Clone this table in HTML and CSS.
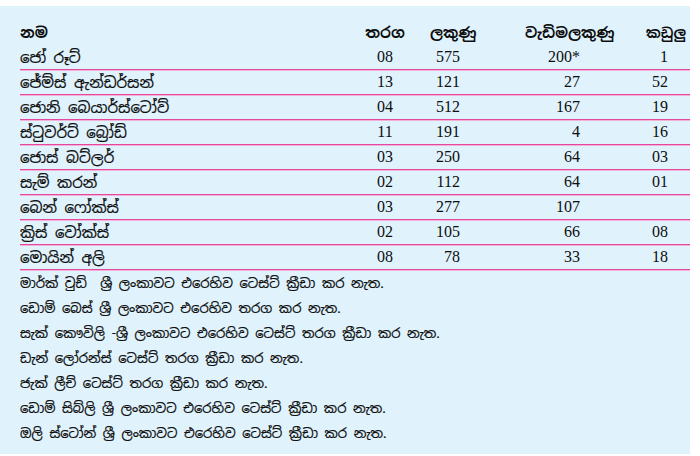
FILE: index.html
```html
<!DOCTYPE html>
<html lang="si">
<head>
<meta charset="utf-8">
<link rel="stylesheet" href="styles.css">
</head>
<body>
<div class="panel">
  <div class="row head">
    <div class="c name">නම</div>
    <div class="c mat">තරග</div>
    <div class="c runs">ලකුණු</div>
    <div class="c best">වැඩිමලකුණු</div>
    <div class="c wk">කඩුලු</div>
  </div>
  <div class="row">
    <div class="c name">ජෝ රූට්</div>
    <div class="c mat num">08</div>
    <div class="c runs num">575</div>
    <div class="c best num">200*</div>
    <div class="c wk num">1</div>
  </div>
  <div class="row">
    <div class="c name">ජේම්ස් ඇන්ඩර්සන්</div>
    <div class="c mat num">13</div>
    <div class="c runs num">121</div>
    <div class="c best num">27</div>
    <div class="c wk num">52</div>
  </div>
  <div class="row">
    <div class="c name">ජොනි බෙයාර්ස්ටෝව්</div>
    <div class="c mat num">04</div>
    <div class="c runs num">512</div>
    <div class="c best num">167</div>
    <div class="c wk num">19</div>
  </div>
  <div class="row">
    <div class="c name">ස්ටුවර්ට් බ්‍රෝඩ්</div>
    <div class="c mat num">11</div>
    <div class="c runs num">191</div>
    <div class="c best num">4</div>
    <div class="c wk num">16</div>
  </div>
  <div class="row">
    <div class="c name">ජොස් බට්ලර්</div>
    <div class="c mat num">03</div>
    <div class="c runs num">250</div>
    <div class="c best num">64</div>
    <div class="c wk num">03</div>
  </div>
  <div class="row">
    <div class="c name">සැම් කරන්</div>
    <div class="c mat num">02</div>
    <div class="c runs num">112</div>
    <div class="c best num">64</div>
    <div class="c wk num">01</div>
  </div>
  <div class="row">
    <div class="c name">බෙන් ෆෝක්ස්</div>
    <div class="c mat num">03</div>
    <div class="c runs num">277</div>
    <div class="c best num">107</div>
    <div class="c wk num"></div>
  </div>
  <div class="row">
    <div class="c name">ක්‍රිස් වෝක්ස්</div>
    <div class="c mat num">02</div>
    <div class="c runs num">105</div>
    <div class="c best num">66</div>
    <div class="c wk num">08</div>
  </div>
  <div class="row">
    <div class="c name">මොයින් අලි</div>
    <div class="c mat num">08</div>
    <div class="c runs num">78</div>
    <div class="c best num">33</div>
    <div class="c wk num">18</div>
  </div>
  <ul class="notes">
    <li>මාර්ක් වුඩ්&nbsp; ශ්‍රී ලංකාවට එරෙහිව ටෙස්ට් ක්‍රීඩා කර නැත.</li>
    <li>ඩොම් බෙස් ශ්‍රී ලංකාවට එරෙහිව තරග කර නැත.</li>
    <li>සැක් කෞවිලි -ශ්‍රී ලංකාවට එරෙහිව ටෙස්ට් තරග ක්‍රීඩා කර නැත.</li>
    <li>ඩැන් ලෝරන්ස් ටෙස්ට් තරග ක්‍රීඩා කර නැත.</li>
    <li>ජැක් ලීච් ටෙස්ට් තරග ක්‍රීඩා කර නැත.</li>
    <li>ඩොම් සිබ්ලි ශ්‍රී ලංකාවට එරෙහිව ටෙස්ට් ක්‍රීඩා කර නැත.</li>
    <li>ඔලි ස්ටෝන් ශ්‍රී ලංකාවට එරෙහිව ටෙස්ට් ක්‍රීඩා කර නැත.</li>
  </ul>
</div>
</body>
</html>
```

FILE: styles.css
```css
html, body {
  margin: 0;
  padding: 0;
  background: #ffffff;
}
body {
  font-family: "Noto Sans Sinhala", "Noto Serif Sinhala", "Iskoola Pota", "Liberation Sans", sans-serif;
  color: #0e0e0e;
  font-size: 15px;
}
.panel {
  margin-top: 6px;
  width: 690px;
  height: 448px;
  box-sizing: border-box;
  background: #e0f3fd;
  padding: 14px 0 0 20px;
}
.row {
  display: grid;
  grid-template-columns: 335px 60px 60px 145px 70px;
  height: 25px;
  align-items: center;
  box-sizing: border-box;
}
.row:not(.head) {
  border-bottom: 1px solid #e4479e;
  box-shadow: 0 1px 0 #f3b1d5;
}
.name,
.notes li {
  -webkit-text-stroke: 0.2px currentColor;
}
.head .c {
  font-weight: bold;
  font-size: 14.5px;
  -webkit-text-stroke: 0;
}
.head .name,
.head .mat {
  font-size: 15px;
}
.head .wk {
  font-size: 14px;
}
.num {
  font-family: "Liberation Serif", "Times New Roman", serif;
  font-size: 16px;
}
.mat { text-align: center; }
.runs.num { text-align: right; padding-right: 15px; }
.head .runs { padding-left: 15px; }
.best.num { text-align: right; padding-right: 40px; }
.head .best { padding-left: 50px; }
.wk.num { text-align: right; padding-right: 22px; }
.head .wk { padding-left: 26px; }
.notes {
  list-style: none;
  margin: 1px 0 0;
  padding: 0;
  font-size: 13.2px;
}
.notes li {
  height: 25px;
  line-height: 25px;
}
```
